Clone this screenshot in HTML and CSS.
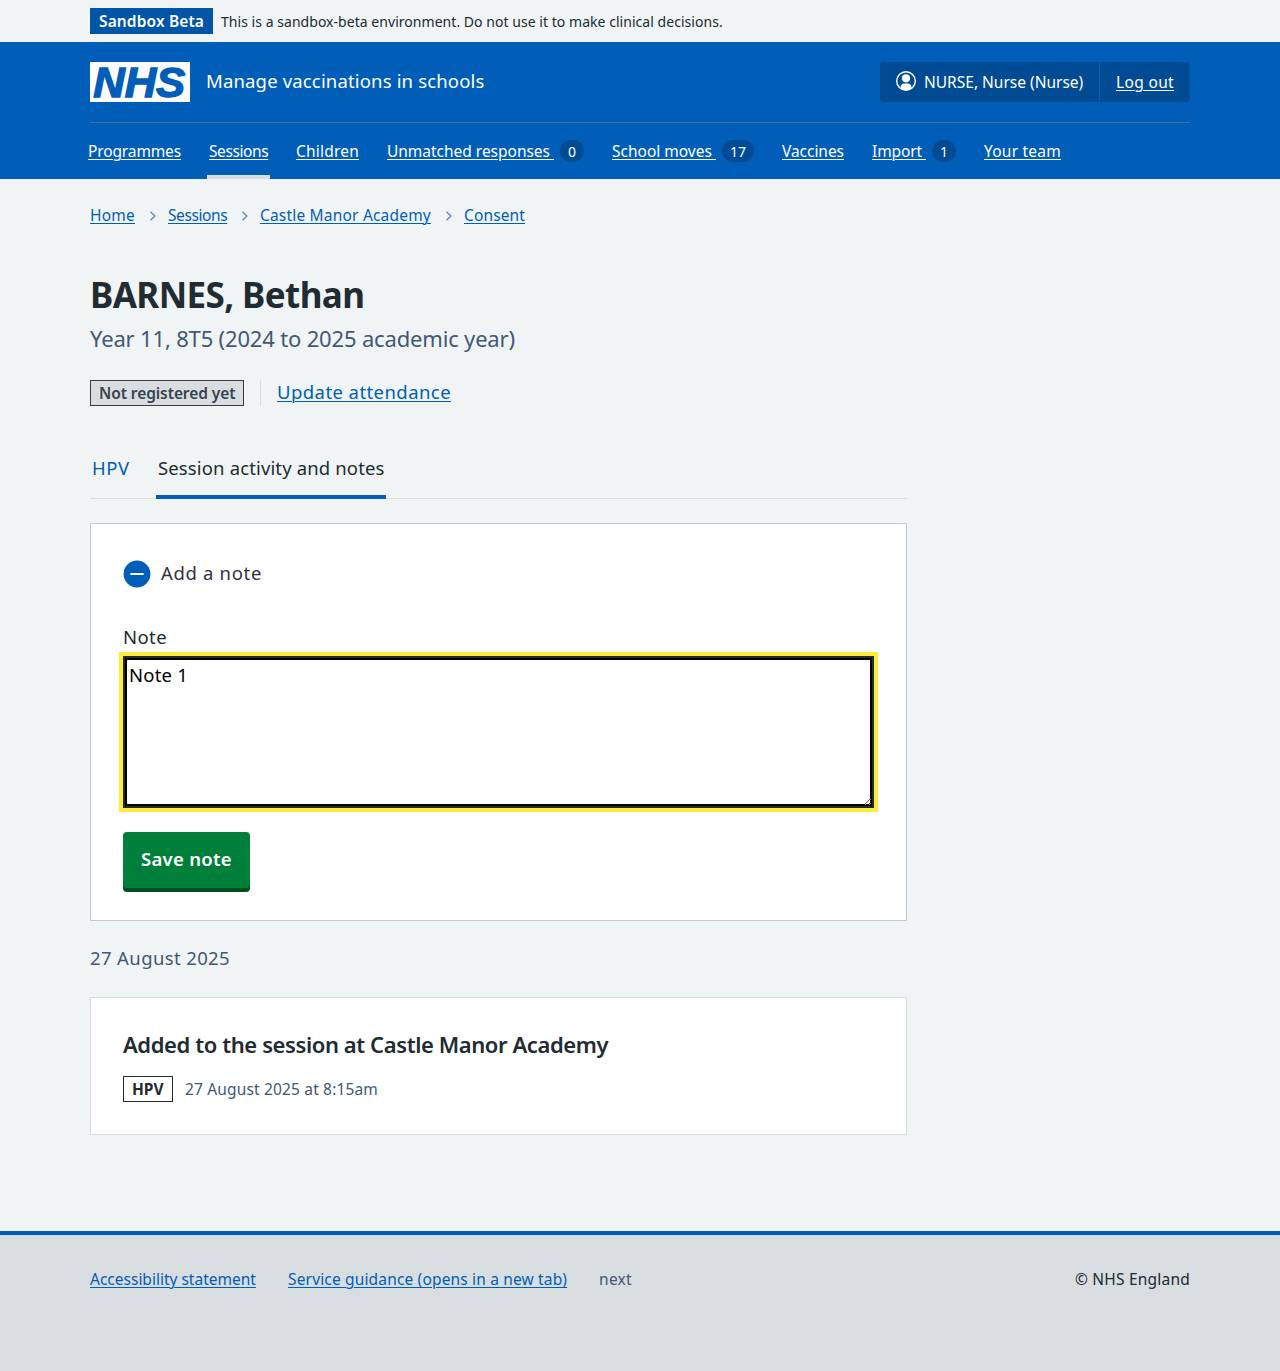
FILE: index.html
```html
<!DOCTYPE html>
<html lang="en">
<head>
<meta charset="utf-8">
<title>BARNES, Bethan – Manage vaccinations in schools</title>
<link rel="stylesheet" href="styles.css">
</head>
<body>
<div class="banner">
  <div class="container banner-row">
    <strong class="env-tag">Sandbox Beta</strong>
    <span class="env-text">This is a sandbox-beta environment. Do not use it to make clinical decisions.</span>
  </div>
</div>

<header class="header">
  <div class="container">
    <div class="header-top">
      <svg class="logo" viewBox="0 0 100 40" role="img" aria-label="NHS">
        <rect width="100" height="40" fill="#fff"/>
        <text x="3.200" y="35.300" textLength="92" lengthAdjust="spacingAndGlyphs">NHS</text>
      </svg>
      <span class="service">Manage vaccinations in schools</span>
      <div class="account">
        <div class="account-user">
          <svg width="20" height="20" viewBox="0 0 20 20" aria-hidden="true">
            <circle cx="10" cy="10" r="9.300" fill="none" stroke="#fff" stroke-width="1.400"/>
            <circle cx="10" cy="7.300" r="4.100" fill="#fff"/>
            <path d="M4.600 17.600V16c0-2.200 1.600-3.500 3.500-3.500h3.800c1.900 0 3.500 1.300 3.500 3.500v1.600C12.500 19.800 7.500 19.800 4.600 17.600Z" fill="#fff"/>
          </svg>
          <span>NURSE, Nurse (Nurse)</span>
        </div>
        <div class="account-out"><a class="logout" href="#">Log out</a></div>
      </div>
    </div>
    <nav class="nav">
      <div class="nav-item"><a class="n-programmes" href="#">Programmes</a></div>
      <div class="nav-item current"><a class="n-sessions" href="#">Sessions</a></div>
      <div class="nav-item"><a class="n-children" href="#">Children</a></div>
      <div class="nav-item"><a class="n-unmatched" href="#">Unmatched responses </a><span class="count">0</span></div>
      <div class="nav-item"><a class="n-moves" href="#">School moves </a><span class="count wide">17</span></div>
      <div class="nav-item"><a class="n-vaccines" href="#">Vaccines</a></div>
      <div class="nav-item"><a class="n-import" href="#">Import </a><span class="count">1</span></div>
      <div class="nav-item"><a class="n-team" href="#">Your team</a></div>
    </nav>
  </div>
</header>

<main class="container main">
  <nav class="crumbs">
    <a class="c-home" href="#">Home</a>
    <svg viewBox="0 0 8 12"><path d="M1.500 1.800 5.800 6 1.500 10.200"/></svg>
    <a class="n-sessions" href="#">Sessions</a>
    <svg viewBox="0 0 8 12"><path d="M1.500 1.800 5.800 6 1.500 10.200"/></svg>
    <a class="c-castle" href="#">Castle Manor Academy</a>
    <svg viewBox="0 0 8 12"><path d="M1.500 1.800 5.800 6 1.500 10.200"/></svg>
    <a class="c-consent" href="#">Consent</a>
  </nav>

  <div class="column">
    <h1>BARNES, Bethan</h1>
    <p class="caption">Year 11, 8T5 (2024 to 2025 academic year)</p>
    <div class="status">
      <strong class="tag grey">Not registered yet</strong>
      <div class="status-action"><a href="#">Update attendance</a></div>
    </div>

    <div class="tabs">
      <a class="tab hpv" href="#">HPV</a>
      <a class="tab active" href="#">Session activity and notes</a>
    </div>

    <section class="card form-card">
      <div class="summary">
        <svg width="28" height="28" viewBox="0 0 28 28" aria-hidden="true">
          <circle cx="14" cy="14" r="13.400" fill="#005eb8"/>
          <path d="M8.200 14h11.600" stroke="#fff" stroke-width="2.200" stroke-linecap="round"/>
        </svg>
        <span>Add a note</span>
      </div>
      <label for="note">Note</label>
      <textarea id="note">Note 1</textarea>
      <button type="button">Save note</button>
    </section>

    <h2>27 August 2025</h2>

    <section class="card event">
      <h3>Added to the session at Castle Manor Academy</h3>
      <div class="event-meta">
        <strong class="tag white">HPV</strong>
        <span>27 August 2025 at 8:15am</span>
      </div>
    </section>
  </div>
</main>

<footer class="footer">
  <div class="container footer-row">
    <a class="f-access" href="#">Accessibility statement</a>
    <a class="f-guide" href="#">Service guidance (opens in a new tab)</a>
    <span class="f-next">next</span>
    <span class="f-copy">© NHS England</span>
  </div>
</footer>
</body>
</html>
```
FILE: styles.css
```css
* { box-sizing: border-box; }

body {
  margin: 0;
  min-height: 1371px;
  display: flex;
  flex-direction: column;
  background: #f0f4f5;
  color: #212b32;
  font: 400 15.5px/24px "Noto Sans", "Open Sans", sans-serif;
  font-kerning: normal;
}

a {
  color: #005eb8;
  text-decoration: underline;
  text-decoration-thickness: 1px;
  text-underline-offset: 2px;
}

h1, h2, h3, p { margin: 0; }

.container { width: 1100px; margin: 0 auto; }

/* Environment banner */
.banner { height: 42px; padding-top: 8px; }
.banner-row { display: flex; gap: 8px; white-space: nowrap; }
.env-tag {
  width: 123px;
  height: 26px;
  padding-left: 9px;
  background: #0055a6;
  color: #fff;
  font-weight: 600;
  line-height: 26px;
  letter-spacing: 0.13px;
}
.env-text { font-size: 14px; line-height: 27px; letter-spacing: 0.04px; }

/* Header */
.header { height: 137px; background: #005eb8; color: #fff; }
.header a { color: #fff; }
.header-top {
  display: flex;
  align-items: center;
  height: 81px;
  border-bottom: 1px solid #3f6e9c;
}
.logo { width: 100px; height: 40px; margin-right: 16px; overflow: visible; }
.logo text {
  fill: #005eb8;
  stroke: #005eb8;
  stroke-width: 1.4px;
  font: italic 700 43px "Liberation Sans", sans-serif;
}
.service { padding-bottom: 2px; font-size: 18.5px; letter-spacing: 0.16px; }
.account {
  display: flex;
  width: 310px;
  height: 40px;
  margin-left: auto;
  border-radius: 4px;
  background: #004b93;
  line-height: 40px;
  white-space: nowrap;
}
.account-user {
  display: flex;
  gap: 8px;
  width: 220px;
  padding-left: 16px;
  border-right: 1px solid #005eb8;
}
.account-user svg { margin-top: 9px; }
.account-out { padding-left: 16px; }
.logout { letter-spacing: 0.34px; }

.nav { display: flex; gap: 24px; margin-left: -4px; height: 56px; }
.nav-item {
  display: flex;
  align-items: center;
  gap: 6px;
  padding: 4px 2px 0;
  border-bottom: 4px solid transparent;
  white-space: pre;
}
.nav-item.current { border-bottom-color: #d8dde0; }
.n-programmes { width: 93px; letter-spacing: -0.13px; }
.n-sessions { width: 59px; letter-spacing: -0.4px; }
.n-children { width: 63px; letter-spacing: 0.21px; }
.n-unmatched { width: 167px; letter-spacing: -0.02px; }
.n-moves { width: 104px; }
.n-vaccines { width: 62px; letter-spacing: -0.04px; }
.n-import { width: 54px; letter-spacing: -0.1px; }
.n-team { width: 77px; letter-spacing: 0.23px; }
.count {
  width: 24px;
  height: 22px;
  border-radius: 12px;
  background: #004b93;
  font-size: 14px;
  line-height: 23px;
  text-align: center;
}
.count.wide { width: 32px; }

/* Breadcrumbs */
.main { flex: 1; }
.crumbs { display: flex; align-items: center; padding-top: 24px; white-space: nowrap; }
.crumbs svg {
  width: 8px;
  height: 12px;
  margin: 1px 11px 0 14px;
  fill: none;
  stroke: #6f8fad;
  stroke-width: 1.5;
}
.c-home { width: 45px; letter-spacing: 0.22px; }
.c-castle { width: 171px; letter-spacing: 0.19px; }
.c-consent { letter-spacing: 0.13px; }

/* Patient heading */
.column { width: 817px; }
h1 {
  padding-top: 44px;
  font-size: 35px;
  font-weight: 700;
  line-height: 47px;
  letter-spacing: -0.6px;
}
.caption {
  padding-top: 2px;
  color: #425874;
  font-size: 22px;
  line-height: 36px;
  letter-spacing: -0.17px;
}
.status { display: flex; gap: 16px; padding-top: 24px; }
.tag {
  height: 26px;
  border: 1px solid;
  padding-left: 8px;
  font-weight: 600;
  line-height: 24px;
  white-space: nowrap;
}
.tag.grey {
  width: 154px;
  background: #d8dde0;
  border-color: #3b3a44;
  color: #37434d;
  letter-spacing: -0.08px;
}
.status-action {
  padding-left: 16px;
  border-left: 1px solid #d8dde0;
  font-size: 18.5px;
  line-height: 24px;
  letter-spacing: 0.43px;
}

/* Tabs */
.tabs {
  display: flex;
  gap: 24px;
  height: 61px;
  margin-top: 32px;
  border-bottom: 1px solid #d8dde0;
  font-size: 18.5px;
  line-height: 60px;
}
.tab { height: 61px; padding: 0 2px; text-decoration: none; white-space: nowrap; }
.tab.hpv { width: 42px; letter-spacing: 0.6px; }
.tab.active {
  width: 230px;
  border-bottom: 4px solid #005eb8;
  color: #212b32;
  letter-spacing: 0.14px;
}

/* Cards */
.card { background: #fff; border: 1px solid #d8dde0; padding: 0 32px; }
.form-card { height: 398px; margin-top: 24px; border-color: #c0ccd3; }
.summary {
  display: flex;
  gap: 10px;
  padding-top: 36px;
  color: #35303f;
  font-size: 18.5px;
  line-height: 25px;
  letter-spacing: 0.67px;
}
label {
  display: block;
  padding-top: 34px;
  font-size: 18.5px;
  line-height: 30px;
  letter-spacing: 0.41px;
}
textarea {
  display: block;
  width: 751px;
  height: 152px;
  margin: 4px 0 0;
  padding: 3px 4px 4px;
  border: 2px solid #212b32;
  border-radius: 0;
  outline: 4px solid #ffeb3b;
  outline-offset: 0;
  box-shadow: inset 0 0 0 2px #000;
  color: #000;
  font: inherit;
  font-size: 18.5px;
  line-height: 28px;
  letter-spacing: 0.2px;
  resize: vertical;
}
button {
  display: block;
  width: 127px;
  height: 56px;
  margin-top: 24px;
  padding: 0 0 2px;
  border: 0;
  border-radius: 4px;
  background: #007f3b;
  box-shadow: 0 4px 0 #00501f;
  color: #fff;
  font: inherit;
  font-size: 18.5px;
  font-weight: 600;
  letter-spacing: 0.3px;
}
h2 {
  padding-top: 23px;
  color: #425874;
  font-size: 18.5px;
  font-weight: 400;
  line-height: 28px;
  letter-spacing: 0.38px;
}
.event { height: 138px; margin-top: 25px; padding-top: 30px; }
h3 { font-size: 22px; font-weight: 600; line-height: 32px; letter-spacing: -0.41px; }
.event-meta { display: flex; gap: 12px; padding-top: 16px; }
.tag.white { width: 50px; border-color: #212b32; font-weight: 700; letter-spacing: 0; }
.event-meta span { color: #425874; line-height: 26px; letter-spacing: 0.16px; }

/* Footer */
.footer { height: 140px; background: #d8dde0; border-top: 4px solid #005eb8; }
.footer-row { display: flex; padding-top: 32px; white-space: nowrap; }
.f-access { width: 198px; }
.f-guide { width: 311px; letter-spacing: 0.16px; }
.f-next { color: #425874; letter-spacing: 0.3px; }
.f-copy { margin-left: auto; letter-spacing: 0.21px; }
```
